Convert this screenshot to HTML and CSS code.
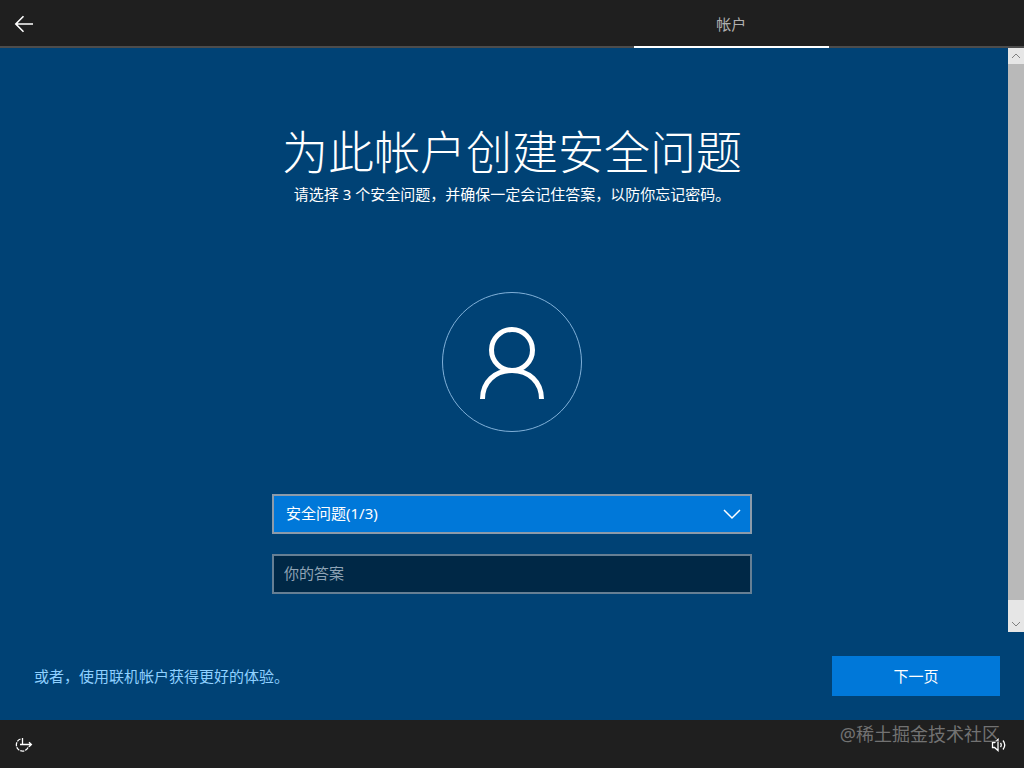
FILE: index.html
```html
<!DOCTYPE html>
<html lang="zh-CN">
<head>
	<meta charset="utf-8">
	<title>为此帐户创建安全问题</title>
	<link rel="stylesheet" href="styles.css">
</head>
<body>
	<header class="topbar">
		<button class="back" type="button" aria-label="返回">
			<svg width="20" height="18" viewBox="0 0 20 18"><path d="M9.5 1.2 L1.8 9 L9.5 16.8 M1.8 9 H19"/></svg>
		</button>
		<nav class="tabs">
			<a class="tab active" href="#account">帐户</a>
		</nav>
	</header>

	<div class="middle">
		<main class="content" id="account">
			<h1>为此帐户创建安全问题</h1>
			<p class="hint">请选择 3 个安全问题，并确保一定会记住答案，以防你忘记密码。</p>
			<div class="avatar">
				<svg width="140" height="140" viewBox="0 0 140 140">
					<circle class="ring" cx="70" cy="70" r="69.5"/>
					<circle class="person" cx="70" cy="58" r="20.5"/>
					<path class="person" d="M40.5 107 C40.5 90 53 78.5 70 78.5 S99.5 90 99.5 107"/>
				</svg>
			</div>
			<form class="questions" id="questions">
				<div class="dropdown">
					<select aria-label="安全问题">
						<option>安全问题(1/3)</option>
					</select>
					<svg class="chevron" width="18" height="11" viewBox="0 0 18 11"><path d="M1 1 L9 9 L17 1"/></svg>
				</div>
				<input class="answer" type="text" placeholder="你的答案" aria-label="你的答案">
			</form>
		</main>
		<div class="scrollbar">
			<button type="button" aria-label="向上滚动"><svg width="10" height="6" viewBox="0 0 10 6"><path d="M1 5 L5 1 L9 5"/></svg></button>
			<div class="thumb"></div>
			<button type="button" aria-label="向下滚动"><svg width="10" height="6" viewBox="0 0 10 6"><path d="M1 1 L5 5 L9 1"/></svg></button>
		</div>
	</div>

	<div class="actions">
		<a class="online" href="#online">或者，使用联机帐户获得更好的体验。</a>
		<button class="next" type="submit" form="questions">下一页</button>
	</div>

	<footer class="bottombar">
		<button type="button" aria-label="轻松使用">
			<svg width="18" height="16" viewBox="0 0 18 16">
				<path class="dial" d="M5.5 2 A6.2 6.2 0 1 0 13.5 9.5"/>
				<path d="M7.5 1 V7.5 M5 7.500 H16.5 M14 5.2 L16.4 7.5 L14 9.8"/>
			</svg>
		</button>
		<button type="button" aria-label="音量">
			<svg width="16" height="14" viewBox="0 0 16 14">
				<path d="M1.5 4.5 H3.5 L7 1.5 V12.5 L3.5 9.5 H1.5 Z M9.5 4.8 Q11 7 9.5 9.2 M12 2.5 Q15.5 7 12 11.5"/>
			</svg>
		</button>
		<span class="watermark">@稀土掘金技术社区</span>
	</footer>
</body>
</html>
```
FILE: styles.css
```css
* { box-sizing: border-box; }

body {
	display: flex;
	flex-direction: column;
	min-height: 100vh;
	margin: 0;
	background: #004275;
	color: #fff;
	font: 15px/20px "Noto Sans", "Noto Sans CJK SC", sans-serif;
}

button, input, select { font: inherit; color: inherit; border-radius: 0; }
button { border: 0; padding: 0; background: none; }
svg { display: block; fill: none; stroke: #fff; }

/* top bar */
.topbar {
	display: flex;
	height: 48px;
	background: #1f1f1f;
}
.back {
	display: grid;
	place-items: center;
	width: 48px;
	padding-top: 2px;
	border-bottom: 2px solid #4c4c4c;
}
.back svg { stroke-width: 1.6; }
.tabs {
	flex: 1;
	display: grid;
	grid-template-columns: repeat(5, 1fr);
	background: linear-gradient(#4c4c4c, #4c4c4c) bottom / 100% 2px no-repeat;
}
.tab {
	grid-column: 4;
	padding-top: 14px;
	border-bottom: 2px solid #fff;
	color: #b0b0b0;
	text-align: center;
	text-decoration: none;
}

/* page */
.middle { flex: 1; display: flex; }
.content {
	flex: 1;
	display: flex;
	flex-direction: column;
	align-items: center;
	padding: 72px 0 38px 16px;
}
h1 {
	margin: 0 0 2px;
	font-size: 46px;
	line-height: 62px;
	font-weight: 300;
}
.hint { margin: 0; }
.avatar { margin: 88px 0 62px; }
.avatar svg { stroke-width: 5; }
.avatar .ring { stroke: #80b0d8; stroke-width: 1; }

.questions {
	display: grid;
	gap: 20px;
	width: 100%;
	max-width: 480px;
}
.dropdown { position: relative; }
.dropdown select {
	display: block;
	width: 100%;
	height: 40px;
	padding: 0 40px 2px 12px;
	border: 2px solid #8c9baa;
	background: #0078d9;
	appearance: none;
}
.chevron {
	position: absolute;
	top: 15px;
	right: 11px;
	stroke-width: 1.5;
	pointer-events: none;
}
.answer {
	height: 40px;
	padding: 0 10px 2px;
	border: 2px solid #667f94;
	background: #002846;
}
.answer::placeholder { color: #8fa3b5; opacity: 1; }

.scrollbar {
	display: flex;
	flex-direction: column;
	width: 16px;
	background: #e6e6e6;
}
.scrollbar button {
	display: grid;
	place-items: center;
	height: 16px;
}
.scrollbar svg { stroke: #808080; }
.thumb { flex: 1; margin-bottom: 16px; background: #b9b9b9; }

.actions {
	display: flex;
	align-items: center;
	justify-content: space-between;
	height: 88px;
	padding: 0 24px 0 34px;
}
.online { color: #8fd0ff; text-decoration: none; }
.next {
	width: 168px;
	height: 40px;
	background: #0078d9;
}

/* bottom bar */
.bottombar {
	position: relative;
	display: flex;
	align-items: center;
	justify-content: space-between;
	height: 48px;
	padding: 2px 17px 0 15px;
	background: #1f1f1f;
}
.bottombar svg { stroke-width: 1.3; }
.bottombar .dial { stroke-dasharray: 4 1; }
.watermark {
	position: absolute;
	top: 3px;
	right: 24px;
	color: #727272;
	font-size: 18px;
	line-height: 22px;
	pointer-events: none;
}
```
